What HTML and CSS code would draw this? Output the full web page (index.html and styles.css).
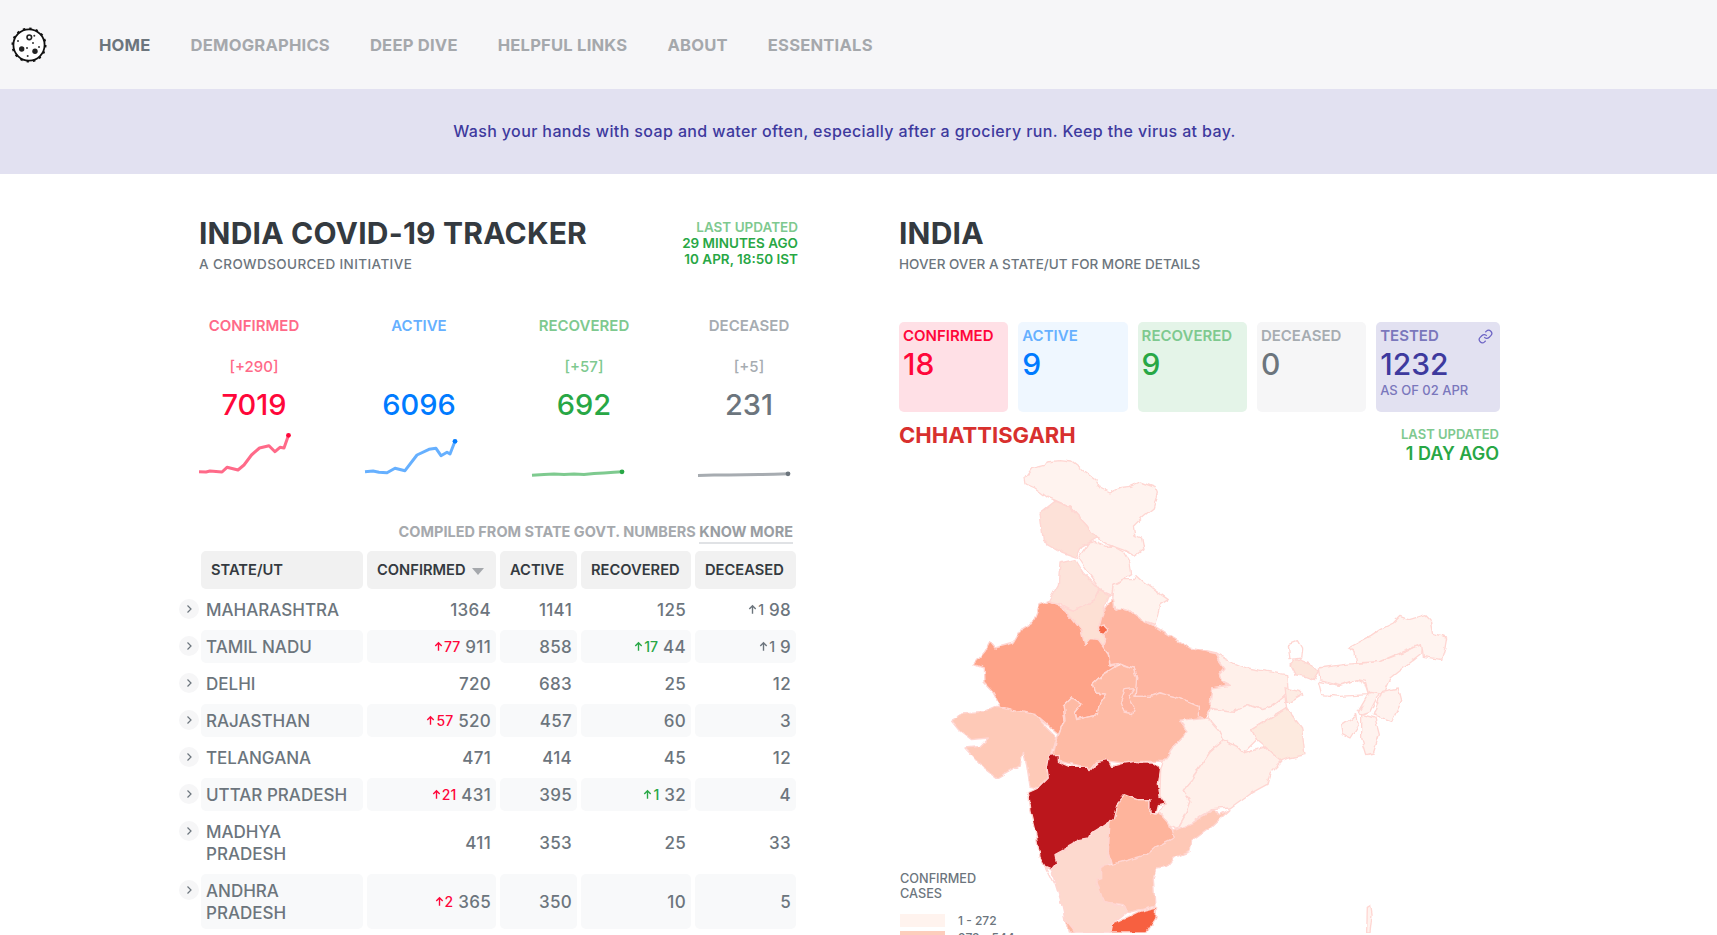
FILE: index.html
```html
<!DOCTYPE html>
<html lang="en">
<head>
    <meta charset="UTF-8">
    <meta name="viewport" content="width=device-width, initial-scale=1.0">
    <title>India COVID-19 Tracker</title>
    <link rel="stylesheet" href="styles.css">
</head>
<body>
    <nav class="navbar">
        <svg class="logo" viewBox="0 0 40 40" width="40" height="40">
            <circle cx="20" cy="20" r="15.6" fill="#fff" stroke="#111" stroke-width="1.8"/>
            <circle cx="20" cy="20" r="16.6" fill="none" stroke="#111" stroke-width="1.8" stroke-dasharray="2.4 4.1"/>
            <circle cx="20.3" cy="12.3" r="2.3" fill="none" stroke="#222" stroke-width="1.6"/>
            <circle cx="12.7" cy="24" r="2.7" fill="#222"/>
            <circle cx="26" cy="26.3" r="2.7" fill="#222"/>
            <circle cx="25.3" cy="10.7" r="1" fill="#333"/>
            <circle cx="9" cy="16" r="1" fill="#333"/>
            <circle cx="24" cy="18" r="1" fill="#333"/>
            <circle cx="30" cy="22" r="1" fill="#333"/>
            <circle cx="18.7" cy="31" r="1" fill="#333"/>
            <circle cx="18" cy="23" r="1" fill="#333"/>
        </svg>
        <a class="nav-link active" href="#">HOME</a>
        <a class="nav-link" href="#">DEMOGRAPHICS</a>
        <a class="nav-link" href="#">DEEP DIVE</a>
        <a class="nav-link" href="#">HELPFUL LINKS</a>
        <a class="nav-link" href="#">ABOUT</a>
        <a class="nav-link" href="#">ESSENTIALS</a>
    </nav>

    <div class="banner">Wash your hands with soap and water often, especially after a grociery run. Keep the virus at bay.</div>

    <main class="main">
        <section class="left">
            <div class="header-row">
                <div>
                    <h1>INDIA COVID-19 TRACKER</h1>
                    <h6 class="tagline">A CROWDSOURCED INITIATIVE</h6>
                </div>
                <div class="updated">
                    <div class="updated-label">LAST UPDATED</div>
                    <div>29 MINUTES AGO</div>
                    <div>10 APR, 18:50 IST</div>
                </div>
            </div>

            <div class="stats">
                <div class="stat confirmed">
                    <div class="stat-label">CONFIRMED</div>
                    <div class="stat-delta">[+290]</div>
                    <div class="stat-value">7019</div>
                    <svg class="spark" viewBox="0 0 110 50" width="110" height="50">
                        <polyline points="0,41.7 7,42 11,41 23,42 28,37.3 39,40 45,35 52.5,25 60.5,18 70,15.7 76,21.7 81,17.3 85,18 89.5,5.3"/>
                        <circle cx="89.5" cy="5.3" r="2.4"/>
                    </svg>
                </div>
                <div class="stat active">
                    <div class="stat-label">ACTIVE</div>
                    <div class="stat-delta">&nbsp;</div>
                    <div class="stat-value">6096</div>
                    <svg class="spark" viewBox="0 0 110 50" width="110" height="50">
                        <polyline points="1,41.7 9,41 15,42.3 23,42.7 31,38.3 41,40.7 53,25 65,19.3 72,18.3 77,25.7 83,22.3 86,24 91,11.3"/>
                        <circle cx="91" cy="11.3" r="2.4"/>
                    </svg>
                </div>
                <div class="stat recovered">
                    <div class="stat-label">RECOVERED</div>
                    <div class="stat-delta">[+57]</div>
                    <div class="stat-value">692</div>
                    <svg class="spark" viewBox="0 0 110 50" width="110" height="50">
                        <polyline points="3,45.3 15,44.6 25,44 35,44.6 45,44 55,44.4 65,43.6 75,43 85,42.2 93,41.8"/>
                        <circle cx="93" cy="41.8" r="2.4"/>
                    </svg>
                </div>
                <div class="stat deceased">
                    <div class="stat-label">DECEASED</div>
                    <div class="stat-delta">[+5]</div>
                    <div class="stat-value">231</div>
                    <svg class="spark" viewBox="0 0 110 50" width="110" height="50">
                        <polyline points="4,45.4 20,45 35,45 50,44.8 65,44.6 80,44.2 94,43.8"/>
                        <circle cx="94" cy="43.8" r="2.4"/>
                    </svg>
                </div>
            </div>

            <div class="compiled">COMPILED FROM STATE GOVT. NUMBERS <a href="#">KNOW MORE</a></div>

            <div class="table">
                <div class="th">STATE/UT</div>
                <div class="th">CONFIRMED <span class="caret"></span></div>
                <div class="th">ACTIVE</div>
                <div class="th">RECOVERED</div>
                <div class="th">DECEASED</div>

                <div class="row">
                    <div class="td name"><span class="chevron"><svg viewBox="0 0 24 24" width="12" height="12"><polyline points="9 5 16 12 9 19"/></svg></span>MAHARASHTRA</div>
                    <div class="td">1364</div>
                    <div class="td">1141</div>
                    <div class="td">125</div>
                    <div class="td"><span class="delta gray"><svg viewBox="0 0 24 24" width="11" height="11"><path d="M12 21V4M5 11l7-7 7 7"/></svg>1</span> 98</div>
                </div>
                <div class="row striped">
                    <div class="td name"><span class="chevron"><svg viewBox="0 0 24 24" width="12" height="12"><polyline points="9 5 16 12 9 19"/></svg></span>TAMIL NADU</div>
                    <div class="td"><span class="delta red"><svg viewBox="0 0 24 24" width="11" height="11"><path d="M12 21V4M5 11l7-7 7 7"/></svg>77</span> 911</div>
                    <div class="td">858</div>
                    <div class="td"><span class="delta green"><svg viewBox="0 0 24 24" width="11" height="11"><path d="M12 21V4M5 11l7-7 7 7"/></svg>17</span> 44</div>
                    <div class="td"><span class="delta gray"><svg viewBox="0 0 24 24" width="11" height="11"><path d="M12 21V4M5 11l7-7 7 7"/></svg>1</span> 9</div>
                </div>
                <div class="row">
                    <div class="td name"><span class="chevron"><svg viewBox="0 0 24 24" width="12" height="12"><polyline points="9 5 16 12 9 19"/></svg></span>DELHI</div>
                    <div class="td">720</div>
                    <div class="td">683</div>
                    <div class="td">25</div>
                    <div class="td">12</div>
                </div>
                <div class="row striped">
                    <div class="td name"><span class="chevron"><svg viewBox="0 0 24 24" width="12" height="12"><polyline points="9 5 16 12 9 19"/></svg></span>RAJASTHAN</div>
                    <div class="td"><span class="delta red"><svg viewBox="0 0 24 24" width="11" height="11"><path d="M12 21V4M5 11l7-7 7 7"/></svg>57</span> 520</div>
                    <div class="td">457</div>
                    <div class="td">60</div>
                    <div class="td">3</div>
                </div>
                <div class="row">
                    <div class="td name"><span class="chevron"><svg viewBox="0 0 24 24" width="12" height="12"><polyline points="9 5 16 12 9 19"/></svg></span>TELANGANA</div>
                    <div class="td">471</div>
                    <div class="td">414</div>
                    <div class="td">45</div>
                    <div class="td">12</div>
                </div>
                <div class="row striped">
                    <div class="td name"><span class="chevron"><svg viewBox="0 0 24 24" width="12" height="12"><polyline points="9 5 16 12 9 19"/></svg></span>UTTAR PRADESH</div>
                    <div class="td"><span class="delta red"><svg viewBox="0 0 24 24" width="11" height="11"><path d="M12 21V4M5 11l7-7 7 7"/></svg>21</span> 431</div>
                    <div class="td">395</div>
                    <div class="td"><span class="delta green"><svg viewBox="0 0 24 24" width="11" height="11"><path d="M12 21V4M5 11l7-7 7 7"/></svg>1</span> 32</div>
                    <div class="td">4</div>
                </div>
                <div class="row">
                    <div class="td name"><span class="chevron"><svg viewBox="0 0 24 24" width="12" height="12"><polyline points="9 5 16 12 9 19"/></svg></span>MADHYA<br>PRADESH</div>
                    <div class="td">411</div>
                    <div class="td">353</div>
                    <div class="td">25</div>
                    <div class="td">33</div>
                </div>
                <div class="row striped">
                    <div class="td name"><span class="chevron"><svg viewBox="0 0 24 24" width="12" height="12"><polyline points="9 5 16 12 9 19"/></svg></span>ANDHRA<br>PRADESH</div>
                    <div class="td"><span class="delta red"><svg viewBox="0 0 24 24" width="11" height="11"><path d="M12 21V4M5 11l7-7 7 7"/></svg>2</span> 365</div>
                    <div class="td">350</div>
                    <div class="td">10</div>
                    <div class="td">5</div>
                </div>
            </div>
        </section>

        <section class="right">
            <h1>INDIA</h1>
            <h6>HOVER OVER A STATE/UT FOR MORE DETAILS</h6>

            <div class="cards">
                <div class="card c-confirmed">
                    <div class="card-label">CONFIRMED</div>
                    <div class="card-value">18</div>
                </div>
                <div class="card c-active">
                    <div class="card-label">ACTIVE</div>
                    <div class="card-value">9</div>
                </div>
                <div class="card c-recovered">
                    <div class="card-label">RECOVERED</div>
                    <div class="card-value">9</div>
                </div>
                <div class="card c-deceased">
                    <div class="card-label">DECEASED</div>
                    <div class="card-value">0</div>
                </div>
                <div class="card c-tested">
                    <div class="card-label">TESTED</div>
                    <svg class="link-icon" viewBox="0 0 24 24" width="15" height="15"><path d="M10 13a5 5 0 0 0 7.54.54l3-3a5 5 0 0 0-7.07-7.07l-1.72 1.71"/><path d="M14 11a5 5 0 0 0-7.54-.54l-3 3a5 5 0 0 0 7.07 7.07l1.71-1.71"/></svg>
                    <div class="card-value">1232</div>
                    <div class="card-note">AS OF 02 APR</div>
                </div>
            </div>

            <div class="state-row">
                <div class="state-name">CHHATTISGARH</div>
                <div class="state-updated">
                    <div class="updated-label">LAST UPDATED</div>
                    <div class="state-ago">1 DAY AGO</div>
                </div>
            </div>

            <div class="map-wrap">
                <svg class="map" viewBox="-183 0 1800 1455" width="600" height="485">
                    <defs>
                        <filter id="rough" x="-5%" y="-5%" width="110%" height="110%">
                            <feTurbulence type="fractalNoise" baseFrequency="0.035" numOctaves="2" seed="4"/>
                            <feDisplacementMap in="SourceGraphic" scale="16" xChannelSelector="R" yChannelSelector="G"/>
                        </filter>
                    </defs>
                    <g filter="url(#rough)">
                    <polygon fill="#fff3ef" points="195,90 215,62 255,52 262,42 300,38 335,42 365,65 405,95 420,120 450,135 485,118 510,115 540,102 585,118 592,135 580,180 550,205 520,235 525,262 545,270 552,305 525,325 495,308 445,290 405,268 380,232 330,178 285,158 262,148 225,120 198,108"/>
                    <polygon fill="#fde1d8" points="240,195 285,160 330,178 380,232 408,270 365,295 350,328 305,312 250,280"/>
                    <polygon fill="#fff1ec" points="355,330 385,285 405,280 440,295 460,295 490,312 510,345 515,380 490,395 460,410 455,440 420,425 385,375"/>
                    <polygon fill="#fff3ee" points="460,410 490,395 520,395 528,380 555,405 590,430 625,455 600,470 585,530 545,515 505,485 490,480 470,495 455,450"/>
                    <polygon fill="#fde3da" points="300,345 345,335 370,375 420,425 405,455 370,475 340,490 300,470 265,462 295,410"/>
                    <polygon fill="#fde0d4" points="300,475 340,490 370,475 405,455 420,425 445,440 430,490 415,545 440,570 430,598 415,578 390,575 375,592 362,545 335,510"/>
                    <polygon fill="#fec9b7" points="-25,820 -10,812 5,795 75,790 110,775 180,780 225,800 260,840 290,870 275,920 260,965 265,990 235,1020 210,1015 200,950 190,910 180,950 110,990 70,960 15,900 60,895 85,870 35,875 -5,845"/>
                    <polygon fill="#feb49f" points="460,450 465,490 490,480 505,485 545,515 585,535 640,570 690,600 770,618 780,640 795,660 778,680 785,700 808,712 755,720 750,780 735,815 715,805 715,775 680,760 640,745 600,735 570,745 525,745 520,720 530,690 520,660 485,645 450,650 445,620 430,598 440,570 415,545 430,490"/>
                    <polygon fill="#fea388" points="265,462 300,475 335,510 362,545 375,592 390,575 415,578 430,598 445,620 450,655 480,645 430,680 398,710 405,735 440,738 420,770 415,800 350,815 345,795 365,770 335,750 310,775 315,815 295,860 225,800 120,775 100,735 72,705 70,660 42,650 75,610 90,582 105,600 160,585 185,542 220,520 240,470"/>
                    <polygon fill="#febaa4" points="398,710 430,680 485,648 520,660 530,690 525,745 570,745 600,735 640,745 680,760 715,775 715,805 745,815 720,818 660,820 682,850 650,885 610,940 540,940 490,945 450,940 410,940 390,965 370,955 300,940 280,920 290,875 315,815 310,775 335,750 365,770 345,795 350,815 415,800 420,770 440,738 405,735"/>
                    <polygon fill="#feb49f" points="495,725 520,722 505,745 522,775 515,800 495,795 482,760"/>
                    <polygon fill="#f5694a" stroke="none" class="delhi" points="415,538 430,531 443,545 430,560 418,553"/>
                    <polygon fill="#fff0ea" points="770,618 810,640 860,660 920,670 980,680 985,730 970,745 935,775 905,785 865,770 820,790 775,785 750,780 755,720 808,712 785,700 778,680 795,660 780,640"/>
                    <polygon fill="#fff6f2" points="750,785 775,785 820,790 865,770 905,785 935,775 975,745 980,780 940,805 875,845 890,875 850,915 830,895 790,875 780,850 745,810"/>
                    <polygon fill="#fdeadf" points="875,845 940,805 980,780 1025,840 1035,920 985,930 960,940 920,900 890,875"/>
                    <polygon fill="#fdece4" points="975,720 1020,730 1030,740 995,760 980,760"/>
                    <polygon fill="#fff" points="985,590 1015,578 1028,600 1025,630 990,635"/>
                    <polygon fill="#fde6dc" points="990,650 1010,635 1060,655 1075,670 1060,695 1035,685 1005,680"/>
                    <polygon fill="#fff3ef" points="1075,660 1150,650 1260,640 1340,610 1390,585 1385,615 1340,650 1290,690 1270,735 1225,735 1215,700 1190,695 1140,710 1080,695"/>
                    <polygon fill="#fff" points="1075,700 1140,712 1190,695 1215,710 1225,740 1140,745 1085,740"/>
                    <polygon fill="#fff4f0" points="1165,600 1230,565 1260,545 1300,525 1320,505 1345,515 1395,500 1410,515 1418,560 1460,570 1455,600 1445,635 1390,625 1385,590 1330,610 1260,640 1190,645 1185,610"/>
                    <polygon fill="#fff3ef" points="1240,800 1265,730 1315,720 1325,760 1295,820"/>
                    <polygon fill="#fff3ef" points="1195,790 1230,730 1258,735 1230,790 1200,800"/>
                    <polygon fill="#fff3ef" points="1145,830 1190,800 1195,830 1170,870 1150,860"/>
                    <polygon fill="#fff3ef" points="1205,800 1245,810 1258,860 1240,915 1220,920 1205,870"/>
                    <polygon fill="#fff" points="255,1255 275,1263 285,1295 280,1305"/>
                    <polygon fill="#fff3ee" points="660,820 745,810 780,850 790,875 750,910 705,975 695,1000 670,1030 690,1060 675,1100 650,1145 630,1135 595,1095 615,1065 600,1045 602,960 610,940 650,885 682,850"/>
                    <polygon fill="#fff0ea" points="790,875 830,895 850,915 910,895 965,940 930,975 920,1010 865,1040 810,1080 755,1085 720,1105 695,1125 650,1145 675,1100 690,1060 670,1030 695,1000 705,975 750,910"/>
                    <polygon fill="#fdd9ce" points="285,1220 340,1190 355,1175 385,1170 430,1135 452,1115 445,1215 450,1245 425,1255 425,1295 410,1300 430,1360 490,1375 500,1395 455,1430 450,1455 335,1455 315,1415 305,1370 285,1305 275,1263 290,1245"/>
                    <polygon fill="#fec8b6" points="810,1085 780,1100 760,1085 695,1125 650,1145 630,1150 640,1170 590,1195 560,1220 490,1240 450,1250 425,1255 425,1295 410,1300 430,1360 490,1370 500,1395 585,1375 580,1290 590,1260 620,1255 640,1230 690,1210 695,1180 750,1140"/>
                    <polygon fill="#feb49c" points="495,1040 535,1055 570,1055 570,1095 588,1098 595,1095 630,1135 640,1170 590,1195 560,1220 490,1240 455,1250 445,1215 450,1115 470,1070"/>
                    <polygon fill="#bb151a" stroke="#bb151a" points="265,925 295,922 295,940 330,955 380,955 390,968 415,940 445,935 455,955 490,945 530,940 550,945 580,945 602,960 595,1010 600,1045 615,1065 595,1070 588,1098 570,1095 570,1055 535,1055 495,1040 470,1070 460,1115 430,1135 390,1160 385,1170 355,1175 340,1190 285,1220 290,1245 275,1263 255,1255 240,1230 230,1170 210,1090 202,1035 235,1020 265,990 260,955"/>
                    <polygon fill="#f7603f" stroke="#f7603f" points="455,1430 500,1410 540,1390 590,1378 588,1410 560,1455 450,1455"/>
                    <polygon fill="#fdb9a3" points="315,1415 335,1440 345,1455 325,1455"/>
                    <polygon fill="#fff3ef" points="1222,1378 1232,1372 1236,1400 1230,1455 1220,1455"/>
                    </g>
                </svg>
                <div class="legend">
                    <div class="legend-title">CONFIRMED<br>CASES</div>
                    <div class="legend-row"><span class="swatch s1"></span>1 - 272</div>
                    <div class="legend-row"><span class="swatch s2"></span>273 - 544</div>
                </div>
            </div>
        </section>
    </main>
</body>
</html>
```
FILE: styles.css
```css
* {
    box-sizing: border-box;
}
html, body {
    height: 935px;
    overflow: hidden;
}
body {
    margin: 0;
    background: #fff;
    font-family: Inter, "Noto Sans", sans-serif;
    color: #6c757d;
}
a {
    text-decoration: none;
}
h1 {
    margin: 0;
    font-size: 30px;
    line-height: 34px;
    letter-spacing: 0.2px;
    font-weight: 700;
    color: #343a40;
}
h6 {
    margin: 6px 0 0;
    font-size: 13.5px;
    line-height: 16px;
    font-weight: 500;
    color: #6c757d;
}
.tagline {
    letter-spacing: 0.4px;
}

/* top bar */
.navbar {
    display: flex;
    align-items: center;
    height: 89px;
    padding-left: 9px;
    background: #f6f6f8;
}
.logo {
    margin-right: 50px;
}
.nav-link {
    margin-right: 40px;
    font-size: 16.6px;
    letter-spacing: 0.2px;
    font-weight: 700;
    color: #a5a8ac;
}
.nav-link.active {
    color: #6c757d;
}
.banner {
    height: 85px;
    padding-right: 28px;
    line-height: 85px;
    text-align: center;
    font-size: 16px;
    letter-spacing: 0.38px;
    font-weight: 500;
    color: #3e3a9e;
    background: #e2e1f1;
}

/* page columns */
.main {
    display: flex;
    gap: 101px;
    padding: 42px 0 0 199px;
}
.left {
    width: 599px;
}
.right {
    width: 600px;
}
.header-row {
    display: flex;
    justify-content: space-between;
}
.updated {
    margin-top: 3px;
    text-align: right;
    font-size: 13.5px;
    line-height: 16px;
    font-weight: 600;
    color: #28a745;
}
.updated-label {
    color: #7ec98f;
}

/* big numbers */
.stats {
    display: flex;
    justify-content: space-between;
    width: 605px;
    margin-top: 45px;
}
.stat {
    width: 110px;
    text-align: center;
}
.stat-label {
    font-size: 15px;
    line-height: 18px;
    font-weight: 600;
}
.stat-delta {
    margin-top: 23px;
    font-size: 15px;
    line-height: 18px;
    font-weight: 500;
}
.stat-value {
    margin-top: 11px;
    font-size: 29px;
    line-height: 36px;
    font-weight: 500;
}
.spark {
    display: block;
    margin-top: 7px;
    fill: currentColor;
}
.spark polyline {
    fill: none;
    stroke-width: 3;
    stroke-linejoin: round;
    opacity: 0.6;
    stroke: currentColor;
}
.confirmed .stat-value, .confirmed .spark {
    color: #ff073a;
}
.active .stat-value, .active .spark {
    color: #007bff;
}
.recovered .stat-value, .recovered .spark {
    color: #28a745;
}
.deceased .stat-value, .deceased .spark {
    color: #6c757d;
}
.confirmed .stat-label, .confirmed .stat-delta {
    color: #ff6a88;
}
.active .stat-label {
    color: #66b0ff;
}
.recovered .stat-label, .recovered .stat-delta {
    color: #7ec98f;
}
.deceased .stat-label, .deceased .stat-delta {
    color: #a6acb1;
}

.compiled {
    margin: 42px 5px 0 0;
    text-align: right;
    font-size: 14.5px;
    line-height: 20px;
    font-weight: 700;
    color: #a6a9ad;
}
.compiled a {
    color: #999da2;
    border-bottom: 2px solid #e0e2e5;
    padding-bottom: 2px;
}

/* state table */
.table {
    display: grid;
    grid-template-columns: 162px 129px 77px 110px 101px;
    gap: 4px;
    width: 595px;
    margin: 9px 0 0 2px;
}
.row {
    display: contents;
}
.th {
    height: 38px;
    padding: 0 10px;
    line-height: 38px;
    font-size: 14.7px;
    font-weight: 600;
    white-space: nowrap;
    color: #343a40;
    background: #f1f1f1;
    border-radius: 5px;
}
.caret {
    display: inline-block;
    margin-left: 3px;
    border-left: 6px solid transparent;
    border-right: 6px solid transparent;
    border-top: 7px solid #a5a8ac;
    vertical-align: 0;
}
.td {
    display: flex;
    align-items: center;
    justify-content: flex-end;
    gap: 5px;
    padding: 5.5px 5px;
    font-size: 17px;
    letter-spacing: 0.3px;
    line-height: 22px;
    font-weight: 500;
    border-radius: 5px;
}
.td.name {
    display: block;
    position: relative;
    padding-left: 5px;
    font-size: 17px;
    letter-spacing: 0;
    text-align: left;
}
.striped .td {
    background: #f8f9fa;
}
.chevron {
    position: absolute;
    left: -22px;
    top: 6px;
    width: 20px;
    height: 20px;
    display: flex;
    align-items: center;
    justify-content: center;
    background: #f6f6f7;
    border-radius: 50%;
}
.chevron svg {
    fill: none;
    stroke: #6c757d;
    stroke-width: 2.4;
}
.delta {
    display: inline-flex;
    align-items: center;
    font-size: 14px;
    letter-spacing: 0;
    font-weight: 500;
}
.delta svg {
    fill: none;
    stroke: currentColor;
    stroke-width: 3;
}
.red {
    color: #ff073a;
}
.green {
    color: #28a745;
}
.gray {
    color: #6c757d;
}

/* right column */
.cards {
    display: grid;
    grid-template-columns: repeat(4, 109.3px) 123.8px;
    gap: 10px;
    margin-top: 50px;
}
.card {
    position: relative;
    height: 90px;
    padding: 5px 4px;
    border-radius: 5px;
}
.card-label {
    font-size: 15px;
    line-height: 18px;
    font-weight: 600;
}
.card-value {
    margin-top: 1px;
    font-size: 30px;
    line-height: 36px;
    font-weight: 500;
}
.card-note {
    font-size: 13px;
    line-height: 16px;
    font-weight: 500;
    color: #7a77bc;
}
.link-icon {
    position: absolute;
    top: 7px;
    right: 7px;
    fill: none;
    stroke: #6c63c4;
    stroke-width: 2;
}
.c-confirmed {
    background: #ffe0e6;
    color: #ff073a;
}
.c-active {
    background: #eff7ff;
    color: #007bff;
}
.c-active .card-label {
    color: #66b0ff;
}
.c-recovered {
    background: #e4f4e8;
    color: #28a745;
}
.c-recovered .card-label {
    color: #7ec98f;
}
.c-deceased {
    background: #f6f6f7;
    color: #6c757d;
}
.c-deceased .card-label {
    color: #a6acb1;
}
.c-tested {
    background: #e2e1f1;
    color: #3e3a9e;
}
.c-tested .card-label {
    color: #7a77bc;
}
.state-row {
    display: flex;
    justify-content: space-between;
    margin-top: 10px;
    height: 26px;
}
.state-name {
    font-size: 22px;
    line-height: 26px;
    font-weight: 700;
    color: #d8302e;
}
.state-updated {
    margin-top: 4px;
    text-align: right;
    font-size: 13px;
    line-height: 16px;
    font-weight: 600;
}
.state-ago {
    margin-top: 1px;
    font-size: 18px;
    line-height: 22px;
    color: #28a745;
}
.map-wrap {
    position: relative;
}
.map {
    display: block;
}
.map polygon {
    stroke: #ffd6d2;
    stroke-width: 4;
    stroke-linejoin: round;
}
.legend {
    position: absolute;
    left: 1px;
    top: 423px;
    font-size: 12.7px;
    font-weight: 500;
}
.legend-title {
    line-height: 15px;
    margin-bottom: 11px;
}
.legend-row {
    display: flex;
    align-items: center;
    gap: 13px;
    height: 17px;
    font-size: 12px;
}
.swatch {
    width: 45px;
    height: 13px;
}
.s1 {
    background: #fff3ee;
}
.s2 {
    background: #fdcdbc;
}
```
